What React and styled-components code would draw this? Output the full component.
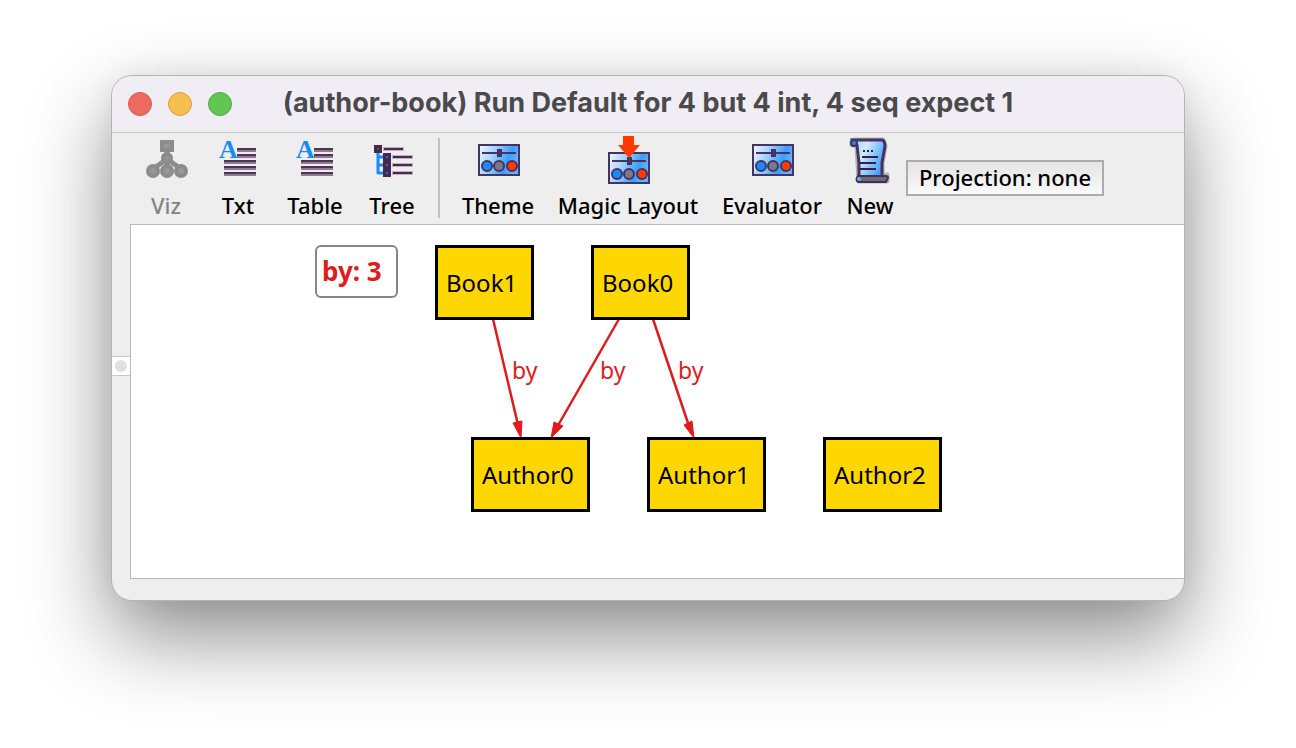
import React from "react";
import styled, { createGlobalStyle } from "styled-components";

const GlobalStyle = createGlobalStyle`
  *, *::before, *::after { box-sizing: border-box; }
  body {
    margin: 0;
    background: #fff;
    color: #000;
    font-family: "Noto Sans", "Open Sans", sans-serif;
  }
`;

const Desktop = styled.div`
  padding: 76px 112px 148px;
`;

const Window = styled.main`
  border-radius: 20px;
  overflow: hidden;
  background: #eee;
  box-shadow:
    0 0 0 1px #b4b4b4,
    0 36px 84px rgba(0, 0, 0, 0.46),
    0 0 32px rgba(0, 0, 0, 0.06);
`;

const TitleBar = styled.header`
  display: grid;
  grid-template-columns: 120px 1fr 120px;
  align-items: center;
  height: 57px;
  padding: 0 16px;
  background: #f0edf4;
  border-bottom: 1px solid #c6c5c8;
`;

const TrafficLights = styled.div`
  display: flex;
  gap: 16px;
`;

const Light = styled.button`
  width: 24px;
  height: 24px;
  padding: 0;
  border: 1px solid ${(p) => p.$edge};
  border-radius: 50%;
  background: ${(p) => p.$fill};
`;

const Title = styled.h1`
  margin: 0;
  padding-bottom: 2px;
  font: 700 27px/32px "Inter", sans-serif;
  color: #4a494b;
  text-align: center;
  white-space: nowrap;
`;

const Toolbar = styled.div`
  display: flex;
  align-items: flex-start;
  height: 91px;
  padding: 3px 18px 0;
`;

const ToolButton = styled.button`
  flex: none;
  display: flex;
  flex-direction: column;
  align-items: center;
  gap: 6px;
  width: ${(p) => p.$width}px;
  padding: 0;
  border: 0;
  background: none;
  color: #000;
  font: 500 22px/30px "Noto Sans", "Open Sans", sans-serif;
  white-space: nowrap;

  &:disabled { color: #848484; }
`;

const Separator = styled.div`
  flex: none;
  width: 2px;
  height: 80px;
  margin: 2px 10px 0;
  background: #c0c0c0;
`;

const ProjectionButton = styled.button`
  flex: none;
  width: 198px;
  height: 36px;
  margin-top: 24px;
  padding: 0 0 2px;
  border: 2px solid #acacac;
  background: linear-gradient(#e4e4e4, #fafafa);
  color: #000;
  font: 500 22px/30px "Noto Sans", "Open Sans", sans-serif;
  white-space: nowrap;
`;

const Workspace = styled.div`
  display: flex;
  padding-bottom: 21px;
`;

const SplitRail = styled.div`
  flex: none;
  display: flex;
  align-items: center;
  width: 18px;
  padding-bottom: 72px;
`;

const SplitHandle = styled.button`
  display: grid;
  place-items: center;
  width: 18px;
  height: 20px;
  padding: 0;
  border: solid #c8c8c8;
  border-width: 1px 0;
  background: #fff;

  &::after {
    content: "";
    width: 12px;
    height: 12px;
    border-radius: 50%;
    background: #e0e0e0;
  }
`;

const Canvas = styled.section`
  position: relative;
  flex: 1;
  min-height: 355px;
  border: solid #b9b9b9;
  border-width: 1px 0 1px 1px;
  background: #fff;
  overflow: hidden;
`;

const Node = styled.div`
  position: absolute;
  left: ${(p) => p.$x}px;
  top: ${(p) => p.$y}px;
  width: ${(p) => p.$width}px;
  height: 75px;
  padding-left: 8px;
  border: 3px solid #000;
  background: #ffd700;
  font-size: 24px;
  line-height: 70px;
  white-space: nowrap;
`;

const Legend = styled.div`
  position: absolute;
  left: 184px;
  top: 20px;
  width: 83px;
  height: 53px;
  padding-left: 5px;
  border: 2px solid #868686;
  border-radius: 6px;
  background: #fff;
  color: #e31a1c;
  font-size: 26px;
  font-weight: 700;
  line-height: 48px;
  white-space: nowrap;
`;

const Edges = styled.svg`
  position: absolute;
  left: 0;
  top: 0;
`;

const EdgeLabel = styled.span`
  position: absolute;
  left: ${(p) => p.$x}px;
  top: 129px;
  color: #e31a1c;
  font-size: 23px;
  line-height: 32px;
`;

const Icon = ({ children }) => (
  <svg width="48" height="48" viewBox="0 0 48 48" aria-hidden="true">
    {children}
  </svg>
);

const VizIcon = () => (
  <Icon>
    <g fill="#989898" stroke="#8c8c8c" strokeWidth="4">
      <path d="M25 14V34M25 23L11 33M25 23L39 33" fill="none" strokeWidth="5" />
      <rect x="20" y="6" width="10" height="8" />
      <circle cx="25" cy="22" r="4" />
      <circle cx="11" cy="35" r="5" />
      <circle cx="25" cy="35" r="5" />
      <circle cx="39" cy="35" r="5" />
    </g>
  </Icon>
);

const TextIcon = () => (
  <Icon>
    {[12, 18, 24, 30, 36].map((y) => {
      const x = y < 24 ? 23 : 10;
      return (
        <g key={y}>
          <rect x={x} y={y} width={42 - x} height="4" fill="#8d7c92" />
          <rect x={x} y={y} width={42 - x} height="2" fill="#4e3354" />
        </g>
      );
    })}
    <text x="5" y="22" fontFamily="Liberation Serif, serif" fontWeight="700" fontSize="26" fill="#168aff">A</text>
  </Icon>
);

const TreeIcon = () => (
  <Icon>
    <path d="M10 16V38M10 21H16M10 29H16M10 37H16" stroke="#168aff" strokeWidth="3" fill="none" />
    {[[6, 9, 36], [15, 17, 45], [15, 25, 45], [15, 33, 45]].map(([x, y, end]) => (
      <g key={y}>
        <rect x={x + 9} y={y + 2} width={end - x - 9} height="4" fill="#bdb4c0" />
        <rect x={x + 10} y={y + 3} width={end - x - 11} height="2" fill="#4a2c4e" />
        <rect x={x} y={y} width="8" height="8" fill="#452a4c" />
        <rect x={x + 3} y={y + 3} width="2" height="2" fill={x === 6 ? "#5c4b66" : "#1a70ff"} />
      </g>
    ))}
  </Icon>
);

const PanelGradient = ({ id }) => (
  <linearGradient id={id} x1="0" y1="0" x2="1" y2="0.3">
    <stop offset="0" stopColor="#f4f9ff" />
    <stop offset="0.4" stopColor="#a4d2ff" />
    <stop offset="0.8" stopColor="#3c9dff" />
    <stop offset="1" stopColor="#64b1ff" />
  </linearGradient>
);

const Panel = ({ id, y = 8 }) => (
  <g stroke="#45345f" strokeWidth="2">
    <defs><PanelGradient id={id} /></defs>
    <rect x="5" y={y + 1} width="40" height="30" fill={`url(#${id})`} />
    <path d={`M8 ${y + 9}H42`} />
    <rect x="24" y={y + 6} width="3" height="6" fill="#45345f" />
    <circle cx="13" cy={y + 22} r="5" fill="#168aff" />
    <circle cx="25" cy={y + 22} r="5" fill="#79788c" />
    <circle cx="38" cy={y + 22} r="5" fill="#ff3a00" />
  </g>
);

const ThemeIcon = () => <Icon><Panel id="panel-theme" /></Icon>;
const EvaluatorIcon = () => <Icon><Panel id="panel-evaluator" /></Icon>;
const MagicIcon = () => (
  <Icon>
    <Panel id="panel-magic" y={16} />
    <path d="M19 0H30V9H36L25 22L14 9H19Z" fill="#ff3a00" />
  </Icon>
);

const ScrollIcon = () => (
  <Icon>
    <defs>
      <linearGradient id="paper" x1="0" y1="0" x2="1" y2="0.5">
        <stop offset="0" stopColor="#9fd0ff" />
        <stop offset="0.4" stopColor="#d2e9ff" />
        <stop offset="1" stopColor="#3f9fff" />
      </linearGradient>
    </defs>
    <path
      d="M8 4H37L39 10L36 27V39H41V45H13L11 9H6V5Z"
      fill="none"
      stroke="#b5b1ba"
      strokeWidth="5"
      strokeLinejoin="round"
    />
    <path d="M7 4H36Q39 5 39 10L36 27V42H13V27L11 9Z" fill="url(#paper)" stroke="#45345f" strokeWidth="3" />
    <circle cx="8" cy="7" r="3" fill="#168aff" stroke="#45345f" strokeWidth="2" />
    <path d="M12 40H40Q42 40 42 42L40 46H12Q9 44 12 40Z" fill="#6c687e" stroke="#45304f" strokeWidth="2" />
    <circle cx="13" cy="43" r="2" fill="#5cb0ff" />
    <path d="M17 15H19M21 15H23M25 15H27M16 21H32M14 27H30M14 33H30" stroke="#33213d" strokeWidth="2" />
  </Icon>
);

const viewTools = [
  { label: "Viz", width: 72, Glyph: VizIcon, disabled: true },
  { label: "Txt", width: 72, Glyph: TextIcon },
  { label: "Table", width: 82, Glyph: TextIcon },
  { label: "Tree", width: 72, Glyph: TreeIcon },
];

const actionTools = [
  { label: "Theme", width: 96, Glyph: ThemeIcon },
  { label: "Magic Layout", width: 164, Glyph: MagicIcon },
  { label: "Evaluator", width: 124, Glyph: EvaluatorIcon },
  { label: "New", width: 72, Glyph: ScrollIcon },
];

const nodes = [
  { label: "Book1", x: 304, y: 20, width: 99 },
  { label: "Book0", x: 460, y: 20, width: 99 },
  { label: "Author0", x: 340, y: 212, width: 119 },
  { label: "Author1", x: 516, y: 212, width: 119 },
  { label: "Author2", x: 692, y: 212, width: 119 },
];

const edges = [
  { line: "M362 94L388 204", head: "M390 213L382 198L391 196Z", labelX: 381 },
  { line: "M488 94L425 204", head: "M420 213L423 197L432 201Z", labelX: 469 },
  { line: "M522 94L559 204", head: "M563 213L553 200L561 196Z", labelX: 547 },
];

const ToolGroup = ({ tools }) =>
  tools.map(({ label, width, Glyph, disabled }) => (
    <ToolButton key={label} type="button" $width={width} disabled={disabled}>
      <Glyph />
      {label}
    </ToolButton>
  ));

export default function App() {
  return (
    <>
      <GlobalStyle />
      <Desktop>
        <Window>
          <TitleBar>
            <TrafficLights>
              <Light type="button" aria-label="Close" $fill="#ed6a5e" $edge="#d8574d" />
              <Light type="button" aria-label="Minimize" $fill="#f5bf4f" $edge="#d8a13c" />
              <Light type="button" aria-label="Zoom" $fill="#62c554" $edge="#51a83f" />
            </TrafficLights>
            <Title>(author-book) Run Default for 4 but 4 int, 4 seq expect 1</Title>
          </TitleBar>
          <Toolbar role="toolbar">
            <ToolGroup tools={viewTools} />
            <Separator />
            <ToolGroup tools={actionTools} />
            <ProjectionButton type="button">Projection: none</ProjectionButton>
          </Toolbar>
          <Workspace>
            <SplitRail>
              <SplitHandle type="button" aria-label="Expand side pane" />
            </SplitRail>
            <Canvas>
              <Edges width="820" height="353" viewBox="0 0 820 353" aria-hidden="true">
                {edges.map(({ line, head }) => (
                  <g key={line} stroke="#e31a1c">
                    <path d={line} strokeWidth="2.500" />
                    <path d={head} fill="#e31a1c" strokeWidth="1" />
                  </g>
                ))}
              </Edges>
              {edges.map(({ labelX }) => (
                <EdgeLabel key={labelX} $x={labelX}>by</EdgeLabel>
              ))}
              {nodes.map(({ label, x, y, width }) => (
                <Node key={label} $x={x} $y={y} $width={width}>{label}</Node>
              ))}
              <Legend>by: 3</Legend>
            </Canvas>
          </Workspace>
        </Window>
      </Desktop>
    </>
  );
}
